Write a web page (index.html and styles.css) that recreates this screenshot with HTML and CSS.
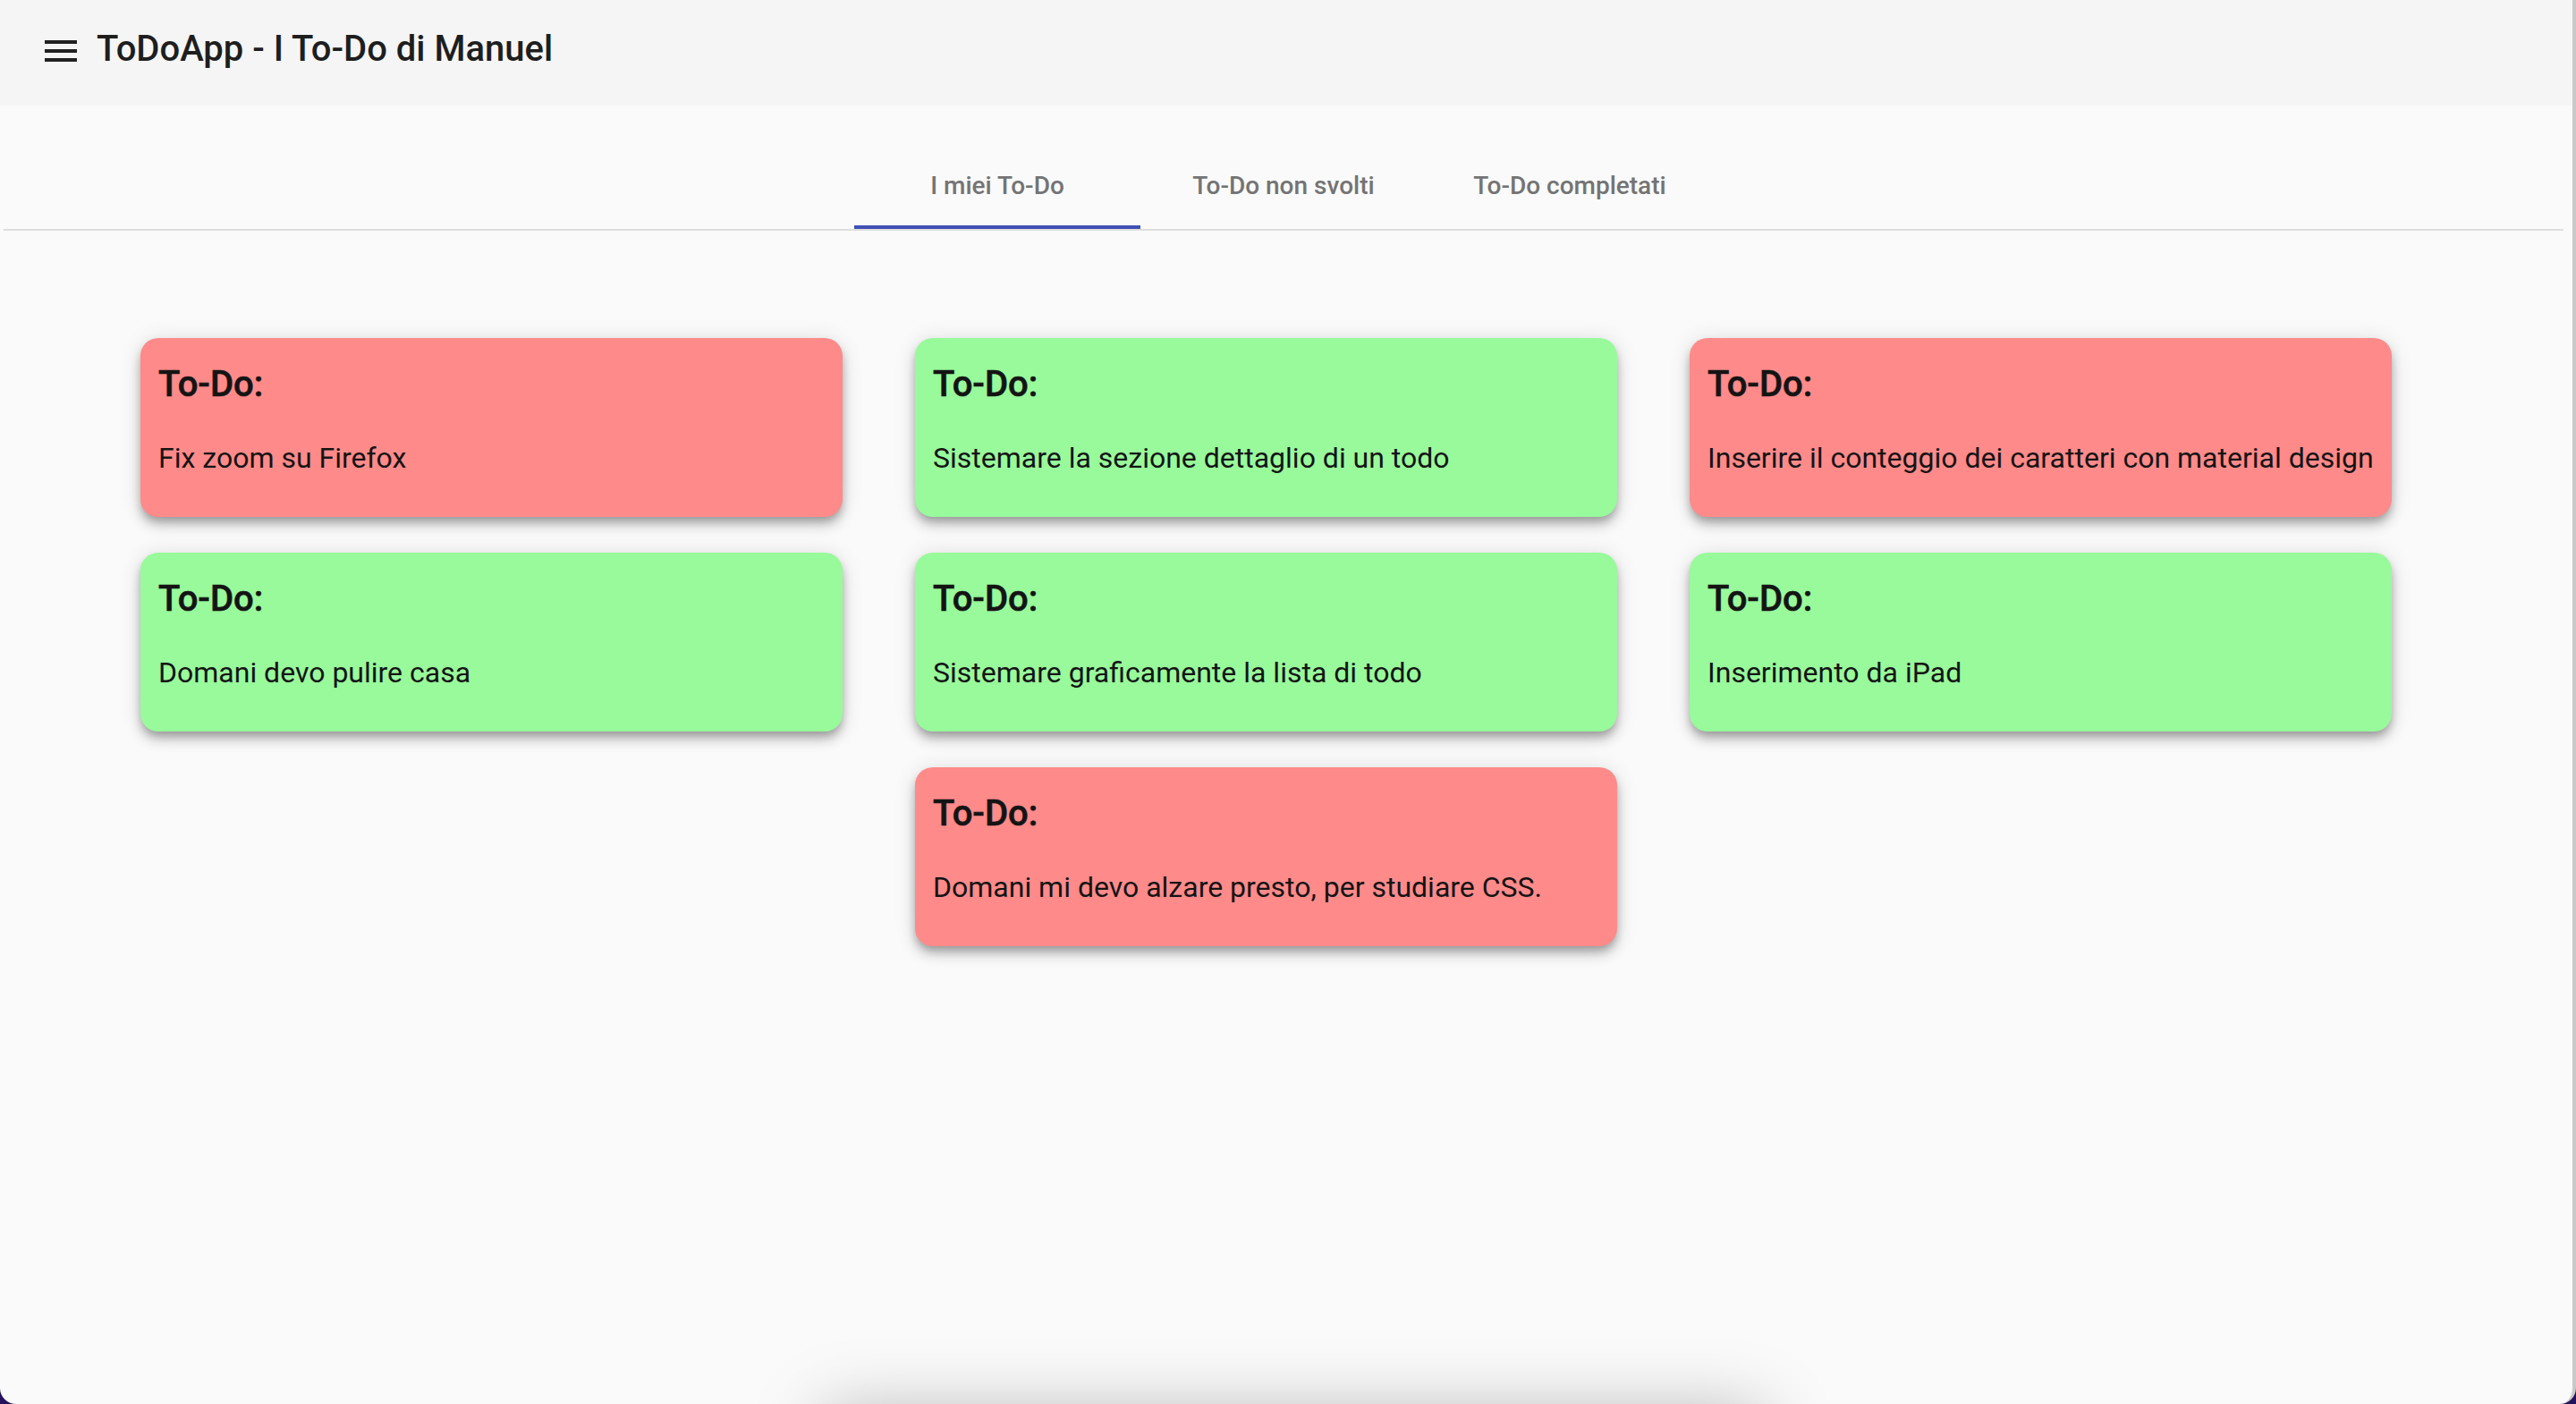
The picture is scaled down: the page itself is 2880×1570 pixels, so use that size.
FILE: index.html
```html
<!DOCTYPE html>
<html lang="it">
<head>
<meta charset="utf-8">
<title>ToDoApp - I To-Do di Manuel</title>
<link rel="stylesheet" href="styles.css">
</head>
<body>
<div class="window">
  <header class="toolbar">
    <span class="menu-btn" aria-label="menu">
      <svg viewBox="0 0 24 24" width="48" height="48"><path d="M3 18h18v-2H3v2zm0-5h18v-2H3v2zm0-7v2h18V6H3z" fill="#212121"/></svg>
    </span>
    <h1 class="title">ToDoApp - I To-Do di Manuel</h1>
  </header>

  <nav class="tabs">
    <div class="tab-list">
      <div class="tab active">I miei To-Do</div>
      <div class="tab">To-Do non svolti</div>
      <div class="tab">To-Do completati</div>
    </div>
  </nav>

  <main class="board">
    <div class="column">
      <article class="card red"><h2 class="card-title">To-Do:</h2><p class="card-text">Fix zoom su Firefox</p></article>
      <article class="card green"><h2 class="card-title">To-Do:</h2><p class="card-text">Domani devo pulire casa</p></article>
    </div>
    <div class="column">
      <article class="card green"><h2 class="card-title">To-Do:</h2><p class="card-text">Sistemare la sezione dettaglio di un todo</p></article>
      <article class="card green"><h2 class="card-title">To-Do:</h2><p class="card-text">Sistemare graficamente la lista di todo</p></article>
      <article class="card red"><h2 class="card-title">To-Do:</h2><p class="card-text">Domani mi devo alzare presto, per studiare CSS.</p></article>
    </div>
    <div class="column">
      <article class="card red"><h2 class="card-title">To-Do:</h2><p class="card-text">Inserire il conteggio dei caratteri con material design</p></article>
      <article class="card green"><h2 class="card-title">To-Do:</h2><p class="card-text">Inserimento da iPad</p></article>
    </div>
  </main>

  <div class="peek-sheet"></div>
</div>
</body>
</html>
```

FILE: styles.css
```css
html {
  background: #24125f;
}

body {
  margin: 0;
  font-family: Roboto, "Noto Sans", "Liberation Sans", sans-serif;
  color: rgba(0, 0, 0, 0.87);
}

.window {
  position: relative;
  box-sizing: border-box;
  height: 100vh;
  overflow: hidden;
  background: #fafafa;
  border-right: 4px solid #c9c9c9;
  border-radius: 0 0 18px 18px;
}

.toolbar {
  display: flex;
  align-items: flex-start;
  height: 118px;
  box-sizing: border-box;
  padding: 31px 0 0 44px;
  background: #f5f5f5;
}

.menu-btn {
  display: block;
  width: 48px;
  height: 48px;
  margin-top: 2px;
}

.menu-btn svg {
  display: block;
}

.title {
  margin: 0 0 0 16px;
  font-size: 40px;
  line-height: 48px;
  font-weight: 500;
  color: #1e1e1e;
  letter-spacing: 0;
}

.tabs {
  margin: 42px 10px 0 4px;
  border-bottom: 2px solid #dedede;
}

.tab-list {
  display: flex;
  justify-content: center;
}

.tab {
  position: relative;
  width: 320px;
  height: 96px;
  line-height: 96px;
  text-align: center;
  font-size: 28px;
  font-weight: 500;
  color: #747474;
}

.tab.active::after {
  content: "";
  position: absolute;
  left: 0;
  right: 0;
  bottom: 0;
  height: 4px;
  background: #3f51b5;
}

.board {
  display: flex;
  align-items: flex-start;
  gap: 81px;
  margin: 120px 0 0 157px;
}

.column {
  display: flex;
  flex-direction: column;
  gap: 40px;
  width: 785px;
}

.card {
  box-sizing: border-box;
  height: 200px;
  padding: 28px 20px 0 20px;
  border-radius: 20px;
  box-shadow: 0 6px 10px -2px rgba(0, 0, 0, 0.24), 0 10px 14px 0 rgba(0, 0, 0, 0.15), 0 2px 24px 0 rgba(0, 0, 0, 0.12);
}

.card.red {
  background: #ff8a8a;
}

.card.green {
  background: #98fa9b;
}

.card-title {
  margin: 0;
  font-size: 40px;
  line-height: 48px;
  font-weight: 500;
  color: #141414;
  -webkit-text-stroke: 0.6px #141414;
}

.card-text {
  margin: 38px 0 0 0;
  font-size: 32px;
  line-height: 40px;
  font-weight: 400;
  color: #141414;
  white-space: nowrap;
}

.peek-sheet {
  position: absolute;
  left: 920px;
  top: calc(100% + 10px);
  width: 1053px;
  height: 120px;
  border-radius: 8px;
  background: #fff;
  box-shadow: 0 0 80px 0 rgba(0, 0, 0, 0.28);
}
```
